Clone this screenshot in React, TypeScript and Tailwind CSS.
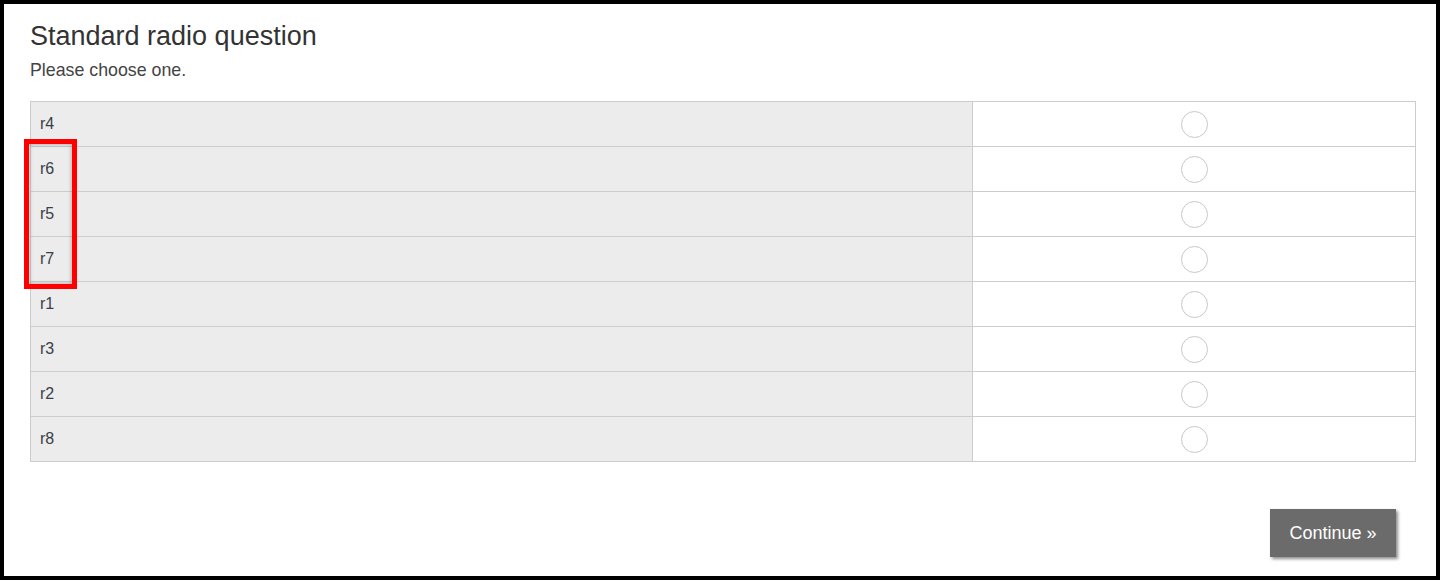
const rows = ['r4', 'r6', 'r5', 'r7', 'r1', 'r3', 'r2', 'r8'];

export default function App() {
  return (
    <div
      className="relative w-[1440px] h-[580px] border-[4px] border-black bg-white pl-[26px] pr-[20px] pt-[17px] text-[#333]"
      style={{ fontFamily: '"Liberation Sans", Arial, sans-serif' }}
    >
      <h1 className="text-[27px] leading-[30px] font-normal">Standard radio question</h1>
      <p className="mt-[9px] text-[17.8px] leading-[20px] text-[#444]">Please choose one.</p>

      <div className="mt-[21px] w-[1386px] border-t border-l border-[#ccc]">
        {rows.map((row) => (
          <div key={row} className="grid grid-cols-[942px_443px] border-b border-[#ccc]">
            <div className="h-[44px] flex items-center pl-[9px] bg-[#ececec] border-r border-[#ccc] text-[16px] text-[#3a3f47]">
              {row}
            </div>
            <div className="h-[44px] flex items-center justify-center border-r border-[#ccc]">
              <span className="w-[27px] h-[27px] rounded-full border border-[#c8c8c8] bg-white" />
            </div>
          </div>
        ))}
      </div>

      <div className="flex justify-end mt-[47px] pr-[20px]">
        <button className="h-[48px] w-[126px] bg-[#6b6b6b] text-white text-[18px] shadow-[2px_2px_3px_rgba(0,0,0,0.45)]">
          Continue »
        </button>
      </div>

      {/* highlight marker */}
      <div className="absolute left-[20px] top-[135px] w-[53px] h-[150px] border-[5px] border-[#ff0000] shadow-[inset_0_0_4px_rgba(0,0,0,0.35)]" />
    </div>
  );
}
